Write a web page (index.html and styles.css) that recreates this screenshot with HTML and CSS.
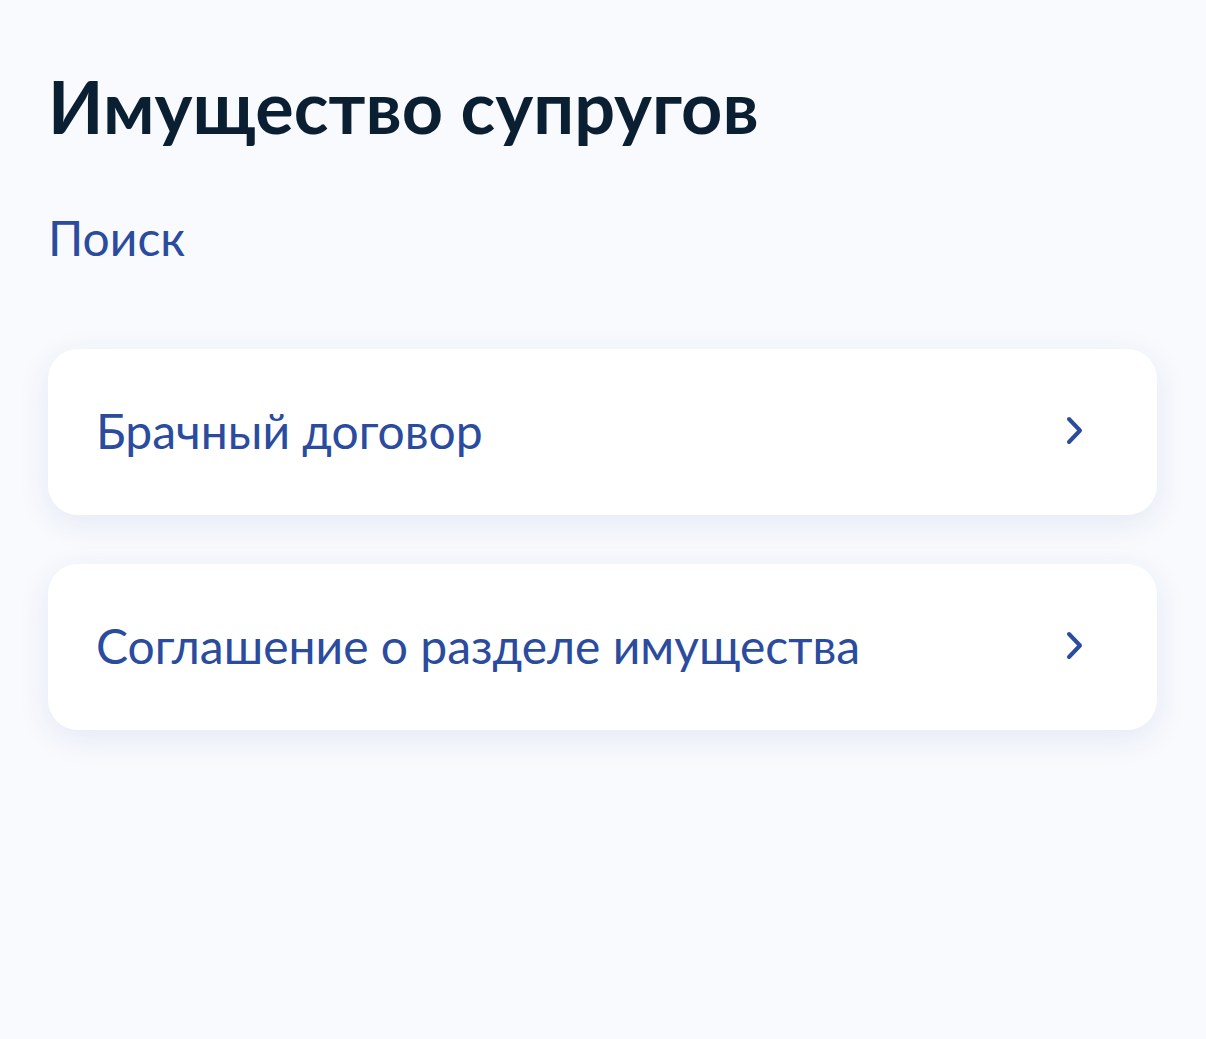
FILE: index.html
```html
<!DOCTYPE html>
<html lang="ru">
<head>
<meta charset="utf-8">
<title>Имущество супругов</title>
<link rel="stylesheet" href="styles.css">
</head>
<body>
<main class="page">
  <h1 class="title">Имущество супругов</h1>
  <a class="search" href="#">Поиск</a>
  <ul class="list">
    <li class="card">
      <span class="card-text">Брачный договор</span>
      <svg class="chevron" width="20" height="32" viewBox="0 0 20 32"><polyline points="4,4 15,15.5 4,27" fill="none" stroke="#2b4c9e" stroke-width="4" stroke-linecap="round" stroke-linejoin="round"/></svg>
    </li>
    <li class="card">
      <span class="card-text">Соглашение о разделе имущества</span>
      <svg class="chevron" width="20" height="32" viewBox="0 0 20 32"><polyline points="4,4 15,15.5 4,27" fill="none" stroke="#2b4c9e" stroke-width="4" stroke-linecap="round" stroke-linejoin="round"/></svg>
    </li>
  </ul>
</main>
</body>
</html>
```

FILE: styles.css
```css
html, body {
  margin: 0;
  padding: 0;
}
body {
  background: #f8fafd;
  font-family: Lato, "Noto Sans", sans-serif;
  width: 1206px;
  height: 1039px;
  overflow: hidden;
}
.page {
  padding: 63px 48px 0 48px;
  display: flex;
  flex-direction: column;
  align-items: flex-start;
}
.title {
  margin: 0;
  font-size: 72px;
  font-weight: 700;
  line-height: 1.2;
  color: #0b1f33;
  letter-spacing: 0;
}
.search {
  margin-top: 60px;
  font-size: 48px;
  line-height: 1.2;
  color: #2b4c9e;
  text-decoration: none;
}
.list {
  list-style: none;
  margin: 82px 0 0 0;
  padding: 0;
  width: 1109px;
  display: flex;
  flex-direction: column;
  gap: 49px;
}
.card {
  height: 166px;
  box-sizing: border-box;
  background: #ffffff;
  border-radius: 30px;
  box-shadow: 0 8px 32px rgba(30, 60, 160, 0.09);
  display: flex;
  align-items: center;
  justify-content: space-between;
  padding: 0 72px 2px 48px;
}
.card-text {
  font-size: 48px;
  line-height: 1.2;
  color: #2b4c9e;
}
.chevron {
  display: block;
  flex: none;
}
```
